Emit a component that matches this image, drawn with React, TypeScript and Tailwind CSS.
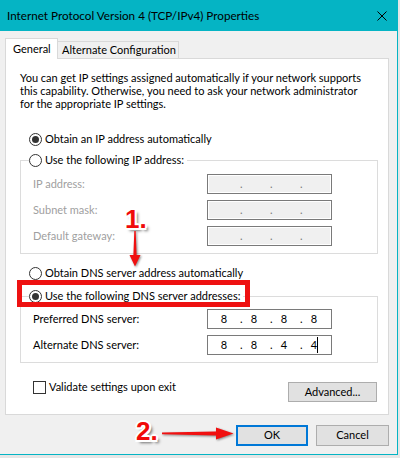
const outline =
  '[text-shadow:_-2px_0_0_#fff,_2px_0_0_#fff,_0_-2px_0_#fff,_0_2px_0_#fff,_-1.5px_-1.5px_0_#fff,_1.5px_1.5px_0_#fff,_-1.5px_1.5px_0_#fff,_1.5px_-1.5px_0_#fff,_3px_3px_3px_rgba(0,0,0,0.55)]'

function Radio({ checked }: { checked?: boolean }) {
  return (
    <span className="flex h-[13px] w-[13px] shrink-0 items-center justify-center rounded-full border border-[#333333] bg-white">
      {checked && <span className="h-[7px] w-[7px] rounded-full bg-[#333333]" />}
    </span>
  )
}

function IpField({ values, disabled, caret }: { values: string[]; disabled?: boolean; caret?: boolean }) {
  return (
    <div
      className={
        disabled
          ? 'flex h-[20px] w-[125px] items-center border border-[#7a7a7a] bg-[#f0f0f0] pl-[6px] text-[#7a7a7a] shadow-[inset_0_0_0_1px_#ffffff]'
          : 'flex h-[20px] w-[125px] items-center border border-[#7a7a7a] bg-white pl-[6px] text-black'
      }
    >
      {values.map((v, i) => (
        <div key={i} className="flex">
          <span className="relative w-[20px] text-center">
            {v}
            {caret && i === 3 && <span className="absolute left-[13px] top-[0px] h-[16px] w-px bg-black" />}
          </span>
          {i < 3 && <span className="w-[10px] pl-[6px]">.</span>}
        </div>
      ))}
    </div>
  )
}

function Row({ label, children, dim }: { label: string; children: React.ReactNode; dim?: boolean }) {
  return (
    <div className="flex h-[20px] items-center">
      <span className={dim ? 'w-[186px] pl-[12px] text-[#a0a0a0]' : 'w-[186px] pl-[12px]'}>{label}</span>
      {children}
    </div>
  )
}

function Group({ legend, checked, children }: { legend: string; checked?: boolean; children: React.ReactNode }) {
  return (
    <div className="relative ml-[14px] w-[358px] border border-[#dcdcdc]">
      <div className="absolute -top-[10px] left-[8px] flex h-[18px] items-center gap-[3px] bg-white pr-[3px]">
        <Radio checked={checked} />
        <span>{legend}</span>
      </div>
      {children}
    </div>
  )
}

function Button({ label, primary, className }: { label: string; primary?: boolean; className: string }) {
  return (
    <div
      className={
        (primary
          ? 'border-2 border-[#0078d7] '
          : 'border border-[#adadad] ') +
        'flex items-center justify-center bg-[#e1e1e1] ' +
        className
      }
    >
      {label}
    </div>
  )
}

export default function App() {
  return (
    <div className="relative h-[458px] w-[400px] overflow-hidden bg-[#e6e6e6] font-['Lato',sans-serif] text-[11px] text-black">
      <div className="flex h-[455px] w-[398px] flex-col border-r border-b border-[#05b4c4] bg-[#f0f0f0]">
        {/* Title bar */}
        <div className="flex h-[31px] shrink-0 items-center justify-between bg-[#05b4c4] pl-[7px] pr-[10px]">
          <span className="text-[11.7px]">Internet Protocol Version 4 (TCP/IPv4) Properties</span>
          <svg width="10" height="10" viewBox="0 0 10 10">
            <path d="M0.5 0.5 L9.5 9.5 M9.5 0.5 L0.5 9.5" stroke="#000" strokeWidth="1" />
          </svg>
        </div>

        {/* Tabs */}
        <div className="relative z-10 mt-[7px] flex h-[20px] items-end pl-[5px]">
          <div className="-mb-px flex h-[21px] w-[53px] items-center border border-b-0 border-[#d9d9d9] bg-white pl-[7px]">
            General
          </div>
          <div className="flex h-[17px] w-[121px] items-center border border-b-0 border-l-0 border-[#d9d9d9] bg-[#f0f0f0] pl-[4px]">
            Alternate Configuration
          </div>
        </div>

        {/* Panel */}
        <div className="ml-[5px] flex h-[357px] w-[384px] flex-col border border-[#d9d9d9] bg-white">
          <p className="mt-[12px] pl-[14px] leading-[13px]">
            You can get IP settings assigned automatically if your network supports
            <br />
            this capability. Otherwise, you need to ask your network administrator
            <br />
            for the appropriate IP settings.
          </p>

          <div className="mt-[20px] ml-[23px] flex h-[18px] items-center gap-[3px]">
            <Radio checked />
            <span>Obtain an IP address automatically</span>
          </div>

          <div className="mt-[12px]">
            <Group legend="Use the following IP address:">
              <div className="flex flex-col gap-[6px] pt-[13px] pb-[7px]">
                <Row label="IP address:" dim>
                  <IpField values={['', '', '', '']} disabled />
                </Row>
                <Row label="Subnet mask:" dim>
                  <IpField values={['', '', '', '']} disabled />
                </Row>
                <Row label="Default gateway:" dim>
                  <IpField values={['', '', '', '']} disabled />
                </Row>
              </div>
            </Group>
          </div>

          <div className="mt-[10px] ml-[23px] flex h-[18px] items-center gap-[3px]">
            <Radio />
            <span>Obtain DNS server address automatically</span>
          </div>

          <div className="mt-[14px]">
            <Group legend="Use the following DNS server addresses:" checked>
              <div className="flex flex-col gap-[6px] pt-[12px] pb-[7px]">
                <Row label="Preferred DNS server:">
                  <IpField values={['8', '8', '8', '8']} />
                </Row>
                <Row label="Alternate DNS server:">
                  <IpField values={['8', '8', '4', '4']} caret />
                </Row>
              </div>
            </Group>
          </div>

          <div className="mt-[18px] flex items-start pl-[27px]">
            <div className="flex h-[13px] items-center gap-[3px]">
              <span className="h-[13px] w-[13px] border border-[#333333] bg-white" />
              <span>Validate settings upon exit</span>
            </div>
            <Button label="Advanced..." className="mt-[1px] mr-[11px] ml-auto h-[20px] w-[89px]" />
          </div>
        </div>

        {/* Dialog buttons */}
        <div className="mt-[10px] flex justify-end gap-[8px] pr-[8px]">
          <Button label="OK" primary className="h-[21px] w-[72px]" />
          <Button label="Cancel" className="h-[21px] w-[73px]" />
        </div>
      </div>

      {/* Annotations */}
      <div className="pointer-events-none absolute left-[17px] top-[280px] h-[27px] w-[233px] border-[5px] border-[#ee1111]" />

      <span
        className={`absolute left-[125px] top-[206px] font-['Liberation_Sans',sans-serif] text-[26px] leading-none font-bold text-[#f00a0a] ${outline}`}
      >
        1.
      </span>
      <svg className="absolute left-[129px] top-[231px] drop-shadow-[1px_1px_1px_rgba(0,0,0,0.45)]" width="12" height="36" viewBox="0 0 12 36">
        <polygon points="5.3,0 6.7,0 7.6,24 11.5,24 6,35.5 0.5,24 4.4,24" fill="#f01010" />
      </svg>

      <span
        className={`absolute left-[136px] top-[418px] font-['Liberation_Sans',sans-serif] text-[26px] leading-none font-bold text-[#f00a0a] ${outline}`}
      >
        2.
      </span>
      <svg className="absolute left-[162px] top-[427px] drop-shadow-[1px_1px_1px_rgba(0,0,0,0.45)]" width="72" height="13" viewBox="0 0 72 13">
        <polygon points="0,5.6 54,4.6 54,0.5 71.5,6.5 54,12.5 54,8.4 0,7.2" fill="#f01010" />
      </svg>
    </div>
  )
}
